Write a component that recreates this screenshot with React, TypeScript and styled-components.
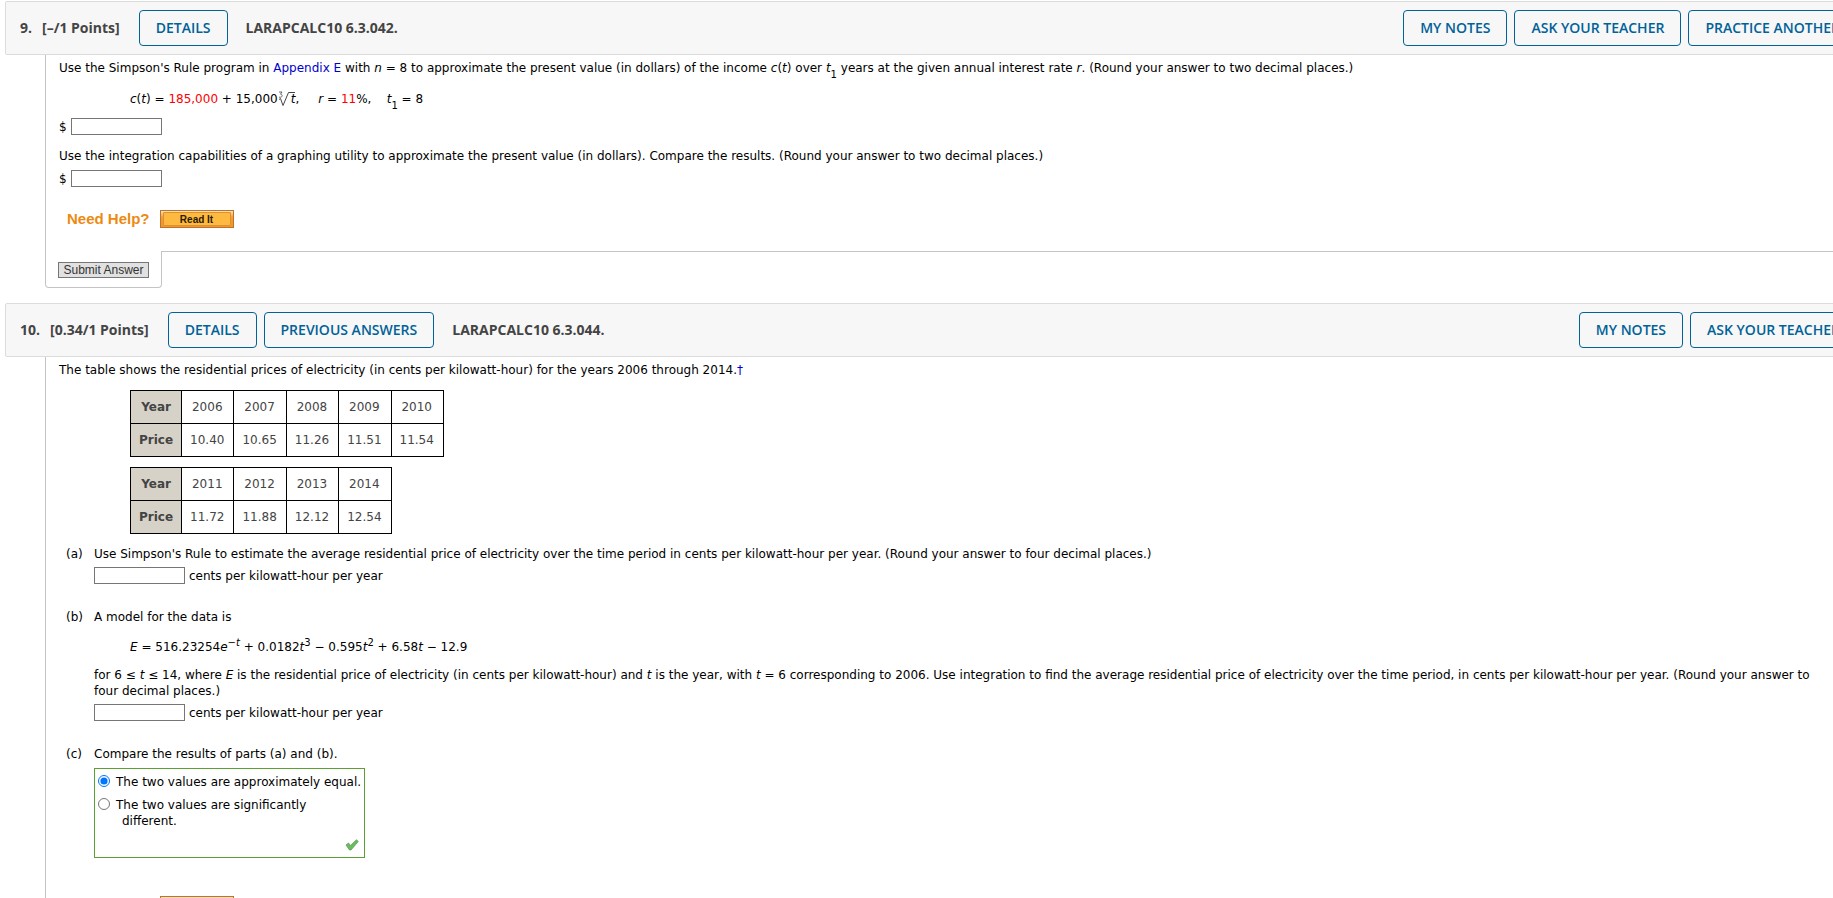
import React from "react";
import styled, { createGlobalStyle } from "styled-components";

const Global = createGlobalStyle`
  *, *::before, *::after { box-sizing: border-box; }
  body {
    margin: 0;
    background: #fff;
    color: #000;
    font: 12px/16px Verdana, "DejaVu Sans", sans-serif;
  }
`;

const Viewport = styled.main`
  height: 100vh;
  overflow: hidden;
`;

const Page = styled.div`
  margin-right: -40px;
  padding: 1px 0 0 5px;
`;

const Question = styled.section`
  margin-bottom: 15px;
`;

const Header = styled.header`
  display: flex;
  align-items: center;
  height: 54px;
  padding: 0 15px 0 14px;
  border: 1px solid #dcdcdc;
  border-radius: 2px;
  background: #f7f7f7;
  color: #444;
  font: 700 14px/20px "Open Sans", sans-serif;
  white-space: nowrap;
`;

const Heading = styled.h2`
  display: flex;
  gap: 10px;
  margin: 0 19px 0 0;
  font: inherit;
`;

const Actions = styled.div<{ $end?: boolean }>`
  display: flex;
  gap: 7px;
  margin-left: ${(p) => (p.$end ? "auto" : "0")};
`;

const Code = styled.strong`
  margin-left: 18px;
  font-weight: 700;
`;

const HeaderButton = styled.button`
  height: 36px;
  padding: 0 16px;
  border: 1px solid #006298;
  border-radius: 4px;
  background: transparent;
  color: #006298;
  font: 600 14px/20px "Open Sans", sans-serif;
`;

const Body = styled.div`
  margin-left: 40px;
  padding: 5px 48px 23px 13px;
  border-left: 1px solid #c4c4c4;
`;

const Text = styled.p<{ $top?: number }>`
  margin: ${(p) => p.$top ?? 0}px 0 0;
`;

const Equation = styled.p<{ $indent: number; $top: number; $bottom: number }>`
  margin: ${(p) => p.$top}px 0 ${(p) => p.$bottom}px ${(p) => p.$indent}px;
  white-space: pre;
`;

const Link = styled.a`
  color: #0000cc;
  text-decoration: none;
`;

const Value = styled.span`
  color: #ff0000;
`;

const Sub = styled.sub`
  font-size: 10px;
  line-height: 0;
  vertical-align: -6px;
`;

const Sup = styled.sup`
  font-size: 10px;
  line-height: 0;
  vertical-align: 5px;
`;

const Root = styled.svg`
  width: 18px;
  height: 16px;
  vertical-align: -4px;
`;

const Radicand = styled.i`
  display: inline-block;
  margin-left: -5px;
`;

const Field = styled.label<{ $top?: number }>`
  display: flex;
  align-items: center;
  gap: 4px;
  width: fit-content;
  height: 17px;
  margin-top: ${(p) => p.$top ?? 5}px;
`;

const Answer = styled.input`
  width: 91px;
  height: 17px;
  padding: 0 2px;
  border: 1px solid #767676;
  background: #fff;
  font: inherit;
`;

const Help = styled.div<{ $top: number }>`
  display: flex;
  align-items: center;
  gap: 10px;
  height: 18px;
  margin: ${(p) => p.$top}px 0 0 8px;
`;

const HelpTitle = styled.strong`
  color: #ec8a12;
  font: 700 15px/18px "Liberation Sans", Arial, sans-serif;
`;

const ReadButton = styled.button`
  display: flex;
  width: 74px;
  height: 18px;
  padding: 1px 2px;
  border: 1px solid #b8762c;
  background: linear-gradient(#fde0bf, #f89a35 40%, #f7932f);
  color: #2a1a00;
  font: 700 10px/13px "Liberation Sans", Arial, sans-serif;

  span {
    flex: 1;
    border: 1px solid #d9922c;
    border-radius: 1px;
    background: #fdb940;
  }
`;

const Footer = styled.footer`
  display: flex;
  margin-left: 40px;
`;

const SubmitTab = styled.div`
  width: 117px;
  height: 37px;
  padding: 11px 0 0 12px;
  border: solid #c4c4c4;
  border-width: 0 1px 1px;
  border-radius: 0 0 4px 4px;
`;

const FooterRule = styled.div`
  flex: 1;
  margin-left: -1px;
  border-top: 1px solid #c4c4c4;
`;

const SubmitButton = styled.button`
  display: block;
  width: 91px;
  height: 16px;
  padding: 0;
  border: 1px solid #767676;
  background: #e1e1e1;
  color: #333;
  font: 12px/14px "Liberation Sans", Arial, sans-serif;
`;

const DataTable = styled.table<{ $top: number }>`
  margin: ${(p) => p.$top}px 0 0 71px;
  border-collapse: collapse;
  color: #444;
  text-align: center;

  th, td {
    height: 33px;
    border: 1px solid #000;
  }
  th {
    padding: 0 8px;
    background: #d6d2c8;
  }
  td {
    padding: 0 9px 0 8px;
  }
`;

const Parts = styled.ol`
  display: flex;
  flex-direction: column;
  gap: 25px;
  margin: 12px 0 0 7px;
  padding: 0;
  list-style: none;
`;

const Part = styled.li`
  display: grid;
  grid-template-columns: 28px 1fr;
`;

const Choices = styled.fieldset`
  display: flex;
  flex-direction: column;
  gap: 7px;
  width: 271px;
  height: 90px;
  min-width: 0;
  margin: 6px 0 0;
  padding: 5px 3px;
  border: 1px solid #5aa032;
`;

const Choice = styled.label`
  display: flex;
  gap: 6px;
  white-space: nowrap;

  input {
    flex: none;
    width: 12px;
    height: 12px;
    margin: 1px 0 0;
  }
`;

const ChoiceText = styled.span`
  padding-left: 6px;
  text-indent: -6px;
`;

const ChoiceLine = styled.span`
  display: block;
  text-indent: 0;
`;

const Check = styled.svg`
  flex: none;
  align-self: flex-end;
  width: 14px;
  height: 12px;
  margin: auto 2px 1px 0;
`;

function PriceTable({ years, prices, top }: { years: number[]; prices: string[]; top: number }) {
  return (
    <DataTable $top={top}>
      <tbody>
        <tr>
          <th scope="row">Year</th>
          {years.map((y) => <td key={y}>{y}</td>)}
        </tr>
        <tr>
          <th scope="row">Price</th>
          {prices.map((p) => <td key={p}>{p}</td>)}
        </tr>
      </tbody>
    </DataTable>
  );
}

function DollarField({ top }: { top: number }) {
  return (
    <Field $top={top}>
      $
      <Answer type="text" />
    </Field>
  );
}

function RateField() {
  return (
    <Field>
      <Answer type="text" />
      cents per kilowatt-hour per year
    </Field>
  );
}

function NeedHelp({ top }: { top: number }) {
  return (
    <Help $top={top}>
      <HelpTitle>Need Help?</HelpTitle>
      <ReadButton type="button"><span>Read It</span></ReadButton>
    </Help>
  );
}

export default function App() {
  return (
    <Viewport>
      <Global />
      <Page>
        <Question>
          <Header>
            <Heading><span>9.</span><span>[–/1 Points]</span></Heading>
            <Actions>
              <HeaderButton>DETAILS</HeaderButton>
            </Actions>
            <Code>LARAPCALC10 6.3.042.</Code>
            <Actions $end>
              <HeaderButton>MY NOTES</HeaderButton>
              <HeaderButton>ASK YOUR TEACHER</HeaderButton>
              <HeaderButton>PRACTICE ANOTHER</HeaderButton>
            </Actions>
          </Header>
          <Body>
            <Text>
              Use the Simpson's Rule program in <Link href="#appendix-e">Appendix E</Link> with <i>n</i> = 8 to
              approximate the present value (in dollars) of the income <i>c</i>(<i>t</i>) over <i>t</i><Sub>1</Sub> years
              at the given annual interest rate <i>r</i>. (Round your answer to two decimal places.)
            </Text>
            <Equation $indent={71} $top={15} $bottom={11}>
              <i>c</i>(<i>t</i>) = <Value>185,000</Value> + 15,000
              <Root viewBox="0 0 18 16" fill="none" stroke="#444" aria-label="cube root">
                <path d="M1 1h3L2.500 3.200c2.200 0 2.200 3 0 3H1" strokeWidth="0.8" />
                <path d="M1 8.500l1.500-1 2.500 7L10.500 1.500H17" />
              </Root>
              <Radicand>t</Radicand>,{"     "}<i>r</i> = <Value>11</Value>%,{"    "}<i>t</i><Sub>1</Sub> = 8
            </Equation>
            <DollarField top={11} />
            <Text $top={13}>
              Use the integration capabilities of a graphing utility to approximate the present value (in dollars).
              Compare the results. (Round your answer to two decimal places.)
            </Text>
            <DollarField top={6} />
            <NeedHelp top={23} />
          </Body>
          <Footer>
            <SubmitTab>
              <SubmitButton type="submit">Submit Answer</SubmitButton>
            </SubmitTab>
            <FooterRule />
          </Footer>
        </Question>

        <Question>
          <Header>
            <Heading><span>10.</span><span>[0.34/1 Points]</span></Heading>
            <Actions>
              <HeaderButton>DETAILS</HeaderButton>
              <HeaderButton>PREVIOUS ANSWERS</HeaderButton>
            </Actions>
            <Code>LARAPCALC10 6.3.044.</Code>
            <Actions $end>
              <HeaderButton>MY NOTES</HeaderButton>
              <HeaderButton>ASK YOUR TEACHER</HeaderButton>
            </Actions>
          </Header>
          <Body>
            <Text>
              The table shows the residential prices of electricity (in cents per kilowatt-hour) for the years 2006
              through 2014.<Link href="#source">†</Link>
            </Text>
            <PriceTable
              top={12}
              years={[2006, 2007, 2008, 2009, 2010]}
              prices={["10.40", "10.65", "11.26", "11.51", "11.54"]}
            />
            <PriceTable
              top={10}
              years={[2011, 2012, 2013, 2014]}
              prices={["11.72", "11.88", "12.12", "12.54"]}
            />
            <Parts>
              <Part>
                <span>(a)</span>
                <div>
                  <Text>
                    Use Simpson's Rule to estimate the average residential price of electricity over the time period in
                    cents per kilowatt-hour per year. (Round your answer to four decimal places.)
                  </Text>
                  <RateField />
                </div>
              </Part>
              <Part>
                <span>(b)</span>
                <div>
                  <Text>A model for the data is</Text>
                  <Equation $indent={36} $top={14} $bottom={12}>
                    <i>E</i> = 516.23254<i>e</i><Sup>−<i>t</i></Sup> + 0.0182<i>t</i><Sup>3</Sup> − 0.595<i>t</i><Sup>2</Sup> + 6.58<i>t</i> − 12.9
                  </Equation>
                  <Text>
                    for 6 ≤ <i>t</i> ≤ 14, where <i>E</i> is the residential price of electricity (in cents per
                    kilowatt-hour) and <i>t</i> is the year, with <i>t</i> = 6 corresponding to 2006. Use integration to
                    find the average residential price of electricity over the time period, in cents per kilowatt-hour
                    per year. (Round your answer to four decimal places.)
                  </Text>
                  <RateField />
                </div>
              </Part>
              <Part>
                <span>(c)</span>
                <div>
                  <Text>Compare the results of parts (a) and (b).</Text>
                  <Choices>
                    <Choice>
                      <input type="radio" name="compare" defaultChecked />
                      <ChoiceText>The two values are approximately equal.</ChoiceText>
                    </Choice>
                    <Choice>
                      <input type="radio" name="compare" />
                      <ChoiceText>
                        The two values are significantly
                        <ChoiceLine>different.</ChoiceLine>
                      </ChoiceText>
                    </Choice>
                    <Check viewBox="0 0 14 12" aria-label="correct">
                      <path d="M1 6l2.500-2 2 2.500L11.500.8 13.300 2.500 6 11H4.500z" fill="#6cba62" stroke="#4f9a48" strokeWidth="0.7" />
                    </Check>
                  </Choices>
                </div>
              </Part>
            </Parts>
            <NeedHelp top={38} />
          </Body>
        </Question>
      </Page>
    </Viewport>
  );
}
